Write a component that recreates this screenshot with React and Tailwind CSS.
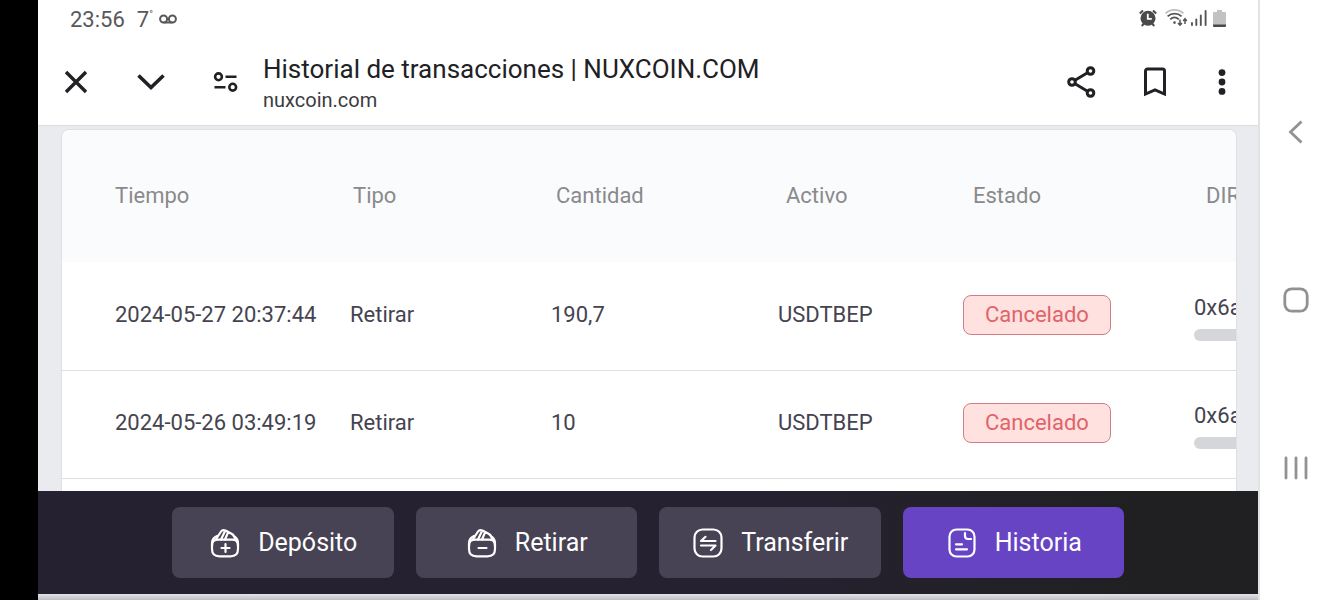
const columns = [
  { name: "Tiempo", width: "w-[288px]", pad: "pl-[53px]" },
  { name: "Tipo", width: "w-[201px]", pad: "pl-[3px]" },
  { name: "Cantidad", width: "w-[227px]", pad: "pl-[5px]" },
  { name: "Activo", width: "w-[185px]", pad: "pl-2" },
  { name: "Estado", width: "w-[231px]", pad: "pl-2.5" },
  { name: "DIR", width: "w-[360px]", pad: "pl-3" },
];

const transactions = [
  { time: "2024-05-27 20:37:44", type: "Retirar", amount: "190,7", asset: "USDTBEP", status: "Cancelado", address: "0x6a" },
  { time: "2024-05-26 03:49:19", type: "Retirar", amount: "10", asset: "USDTBEP", status: "Cancelado", address: "0x6a" },
];

function StatusBar() {
  return (
    <div className="flex h-10 shrink-0 items-center justify-between px-8 text-[22px] leading-[26px] text-[#58585a]">
      <div className="flex items-center">
        <span>23:56</span>
        <span className="ml-3 flex items-start">
          7<span className="text-[10px] leading-4">°</span>
        </span>
        <svg className="ml-1.5" width="18" height="13" viewBox="0 0 18 13" fill="none" stroke="currentColor" strokeWidth="2">
          <circle cx="4.6" cy="5" r="3.5" />
          <circle cx="13.4" cy="5" r="3.5" />
          <path d="M4.6 8.5h8.8" />
        </svg>
      </div>
      <div className="flex items-center pb-1">
        <svg width="18" height="18" viewBox="0 0 18 18" fill="none" stroke="#4a4a4a">
          <circle cx="9" cy="9.2" r="7.5" fill="#4a4a4a" stroke="none" />
          <path d="M.8 4.4 4 1.4M17.2 4.4 14 1.4M2.8 17l2-2.4M15.2 17l-2-2.4" strokeWidth="2" />
          <path d="M8.8 4.8v5h4" stroke="#fff" strokeWidth="1.8" />
        </svg>
        <svg className="ml-2" width="22" height="18" viewBox="0 0 22 18" fill="none" stroke="#555" strokeWidth="1.8">
          <path d="M.6 4.4c5-4.6 12.8-4.6 17.8 0" stroke="#bdbdbd" />
          <path d="M2.6 7.4c4-3.6 10-3.6 14 0" />
          <path d="M5.2 10.4c2.6-2.4 6-2.4 8.6 0" />
          <circle cx="9.5" cy="13.6" r="1.3" fill="#555" stroke="none" />
          <path d="M15 10.5V16m-2-2 2 2.2 2-2.2M20 15v-5m-1.8 2L20 9.8l1.8 2.2" strokeWidth="1.5" />
        </svg>
        <svg className="ml-1" width="16" height="16" viewBox="0 0 16 16" stroke="#555" strokeWidth="1.9" strokeLinecap="round">
          <path d="M1 13v2M5.3 9.5V15M9.8 5.5V15M14.6 1V15" />
        </svg>
        <svg className="ml-1.5" width="13" height="17" viewBox="0 0 13 17">
          <path d="M4 0h5v2h3a1 1 0 0 1 1 1v12H0V3a1 1 0 0 1 1-1h3z" fill="#c2c2c2" />
          <path d="M0 14.5h13V16a1 1 0 0 1-1 1H1a1 1 0 0 1-1-1z" fill="#4a4a4a" />
        </svg>
      </div>
    </div>
  );
}

function BrowserBar() {
  return (
    <header className="flex h-[85px] shrink-0 items-center justify-between pr-5 pb-0.5 pl-6 text-[#202124]">
      <div className="flex items-center">
        <button aria-label="Cerrar" className="flex size-7 items-center justify-center">
          <svg width="24" height="24" viewBox="0 0 24 24" fill="none" stroke="currentColor" strokeWidth="3.4">
            <path d="m2 2 20 20M22 2 2 22" />
          </svg>
        </button>
        <button aria-label="Minimizar" className="ml-[47px] flex size-7 items-center justify-center">
          <svg width="28" height="18" viewBox="0 0 28 18" fill="none" stroke="currentColor" strokeWidth="3.6">
            <path d="m1.5 2.5 12.500 12 12.500-12" />
          </svg>
        </button>
        <button aria-label="Información del sitio" className="ml-[47px] flex size-7 items-center justify-center">
          <svg width="26" height="22" viewBox="0 0 26 22" fill="none" stroke="currentColor" strokeWidth="2.6">
            <circle cx="5.5" cy="5.8" r="3.4" />
            <circle cx="19.7" cy="16.2" r="3.4" />
            <path d="M12.5 5.8h11M1.5 16.2h11" />
          </svg>
        </button>
        <div className="ml-[23px] pt-1">
          <h1 className="text-[26px] leading-8">Historial de transacciones | NUXCOIN.COM</h1>
          <p className="text-[20px] leading-[30px] text-[#3c3c3e]">nuxcoin.com</p>
        </div>
      </div>
      <div className="flex items-center">
        <button aria-label="Compartir">
          <svg width="30" height="32" viewBox="0 0 30 32" fill="none" stroke="currentColor" strokeWidth="3">
            <circle cx="5" cy="16" r="3.3" />
            <circle cx="23.500" cy="5" r="3.3" />
            <circle cx="23.500" cy="27" r="3.3" />
            <path d="m8 14.3 12.500-7.600M8 17.700l12.500 7.600" />
          </svg>
        </button>
        <button aria-label="Guardar" className="ml-[46px]">
          <svg width="24" height="30" viewBox="0 0 24 30" fill="none" stroke="currentColor" strokeWidth="3">
            <path d="M2.500 27V4a2 2 0 0 1 2-2h15a2 2 0 0 1 2 2v23L12 22.800z" />
          </svg>
        </button>
        <button aria-label="Más opciones" className="ml-[39px]">
          <svg width="32" height="28" viewBox="0 0 32 28" fill="currentColor">
            <circle cx="16" cy="4.6" r="3.4" />
            <circle cx="16" cy="14" r="3.4" />
            <circle cx="16" cy="23.4" r="3.4" />
          </svg>
        </button>
      </div>
    </header>
  );
}

function TransactionTable() {
  return (
    <main className="min-h-0 flex-1 overflow-hidden border-t border-[#dcdce0] bg-[#eaebee] pt-[3px] pr-[21px] pl-[23px]">
      <div className="h-full overflow-hidden rounded-t-[8px] border border-b-0 border-[#dfe0e3] bg-white">
        <table className="w-[1492px] table-fixed border-collapse text-left text-[22px] leading-[26px] text-[#454350]">
          <thead>
            <tr className="h-[132px] bg-[#fafbfd] text-[#8a8a8c]">
              {columns.map((col) => (
                <th key={col.name} className={`${col.width} ${col.pad} font-normal`}>{col.name}</th>
              ))}
            </tr>
          </thead>
          <tbody>
            {transactions.map((tx) => (
              <tr key={tx.time} className="h-[108px] border-b border-[#dedfe1]">
                <td className="pb-0.5 pl-[53px]">{tx.time}</td>
                <td className="pb-0.5">{tx.type}</td>
                <td className="pb-0.5">{tx.amount}</td>
                <td className="pb-0.5">{tx.asset}</td>
                <td className="pb-0.5">
                  <span className="inline-block rounded-[8px] border border-[#cf7f83] bg-[#ffe1e0] px-[21px] py-1.5 text-[#e06468]">
                    {tx.status}
                  </span>
                </td>
                <td className="pt-1">
                  <div>{tx.address}</div>
                  <div className="mt-2 h-3 rounded-full bg-[#d5d6d9]" />
                </td>
              </tr>
            ))}
          </tbody>
        </table>
      </div>
    </main>
  );
}

function PurseIcon({ plus }) {
  return (
    <svg width="30" height="30" viewBox="0 0 30 30" fill="none" stroke="currentColor" strokeWidth="2.2" strokeLinejoin="round" strokeLinecap="round">
      <path d="M2 18c0-4.500 1.500-6.300 6-6.300h14c4.500 0 6 1.800 6 6.300v3c0 5-2.500 7.300-7.500 7.300h-11C4.500 28.300 2 26 2 21z" />
      <path d="M2 18v-2.500c0-3.500 1.500-6 5-7.500M28 18v-2.500c0-3-1-5-3-6.500" />
      <path d="M5.500 12 11 3.500c1-1.500 2.500-1.800 4.500-1l6.500 3.500c2 1.200 2.800 3 3.200 6M11 11.500l3.800-8M15 11.500l3-7" />
      <path d={plus ? "M11.500 20h8M15.500 16v8" : "M11.500 20h8"} />
    </svg>
  );
}

function TransferIcon() {
  return (
    <svg width="30" height="30" viewBox="0 0 30 30" fill="none" stroke="currentColor" strokeWidth="2.2" strokeLinecap="round" strokeLinejoin="round">
      <rect x="1.5" y="1.5" width="27" height="27" rx="8" />
      <path d="M22.5 13H8l4.500-4.200M8 17.500h14.500L18 22" />
    </svg>
  );
}

function HistoryIcon() {
  return (
    <svg width="30" height="30" viewBox="0 0 30 30" fill="none" stroke="currentColor" strokeWidth="2.2" strokeLinecap="round" strokeLinejoin="round">
      <rect x="2.5" y="1.5" width="25" height="27" rx="7" />
      <path d="M18 5v3c0 2 1 3 3 3h3M9 16.300h6M9 21.300h11" />
    </svg>
  );
}

const actions = [
  { label: "Depósito", icon: <PurseIcon plus /> },
  { label: "Retirar", icon: <PurseIcon /> },
  { label: "Transferir", icon: <TransferIcon /> },
  { label: "Historia", icon: <HistoryIcon />, active: true },
];

function ActionBar() {
  return (
    <nav className="shrink-0 bg-linear-to-r from-[#262130] from-60% to-[#202022] to-90% p-4">
      <div className="mx-auto grid max-w-[952px] grid-cols-4 gap-[22px]">
        {actions.map((action) => (
          <button
            key={action.label}
            className={`flex h-[71px] items-center justify-center gap-[18px] rounded-[8px] pl-0.5 text-[25px] text-white ${
              action.active ? "bg-[#6644c4]" : "bg-[#474254]"
            }`}
          >
            {action.icon}
            {action.label}
          </button>
        ))}
      </div>
    </nav>
  );
}

function SystemNav() {
  return (
    <aside className="flex w-[75px] shrink-0 flex-col items-center justify-between border-l-2 border-[#e2e2e4] bg-white py-[118px] pr-0.5 text-[#929292]">
      <button aria-label="Atrás">
        <svg width="28" height="28" viewBox="0 0 28 28" fill="none" stroke="currentColor" strokeWidth="2.8">
          <path d="M19.5 3.5 8.5 14l11 10.500" />
        </svg>
      </button>
      <button aria-label="Inicio">
        <svg width="28" height="28" viewBox="0 0 28 28" fill="none" stroke="currentColor" strokeWidth="2.8">
          <rect x="2.8" y="2.8" width="22.4" height="22.4" rx="7" />
        </svg>
      </button>
      <button aria-label="Recientes">
        <svg width="28" height="28" viewBox="0 0 28 28" fill="none" stroke="currentColor" strokeWidth="2.8" strokeLinecap="round">
          <path d="M4 4v20M14 4v20M24 4v20" />
        </svg>
      </button>
    </aside>
  );
}

export default function App() {
  return (
    <div className="flex h-screen overflow-hidden bg-white font-[Roboto,sans-serif]">
      <div className="w-[38px] shrink-0 bg-black" />
      <div className="flex min-w-0 flex-1 flex-col">
        <StatusBar />
        <BrowserBar />
        <TransactionTable />
        <ActionBar />
        <div className="h-1.5 shrink-0 bg-linear-to-b from-[#e4e4e8] to-[#bfbfc3]" />
      </div>
      <SystemNav />
    </div>
  );
}
